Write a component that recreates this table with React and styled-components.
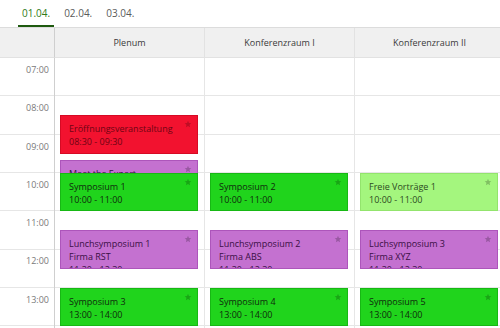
import styled, { createGlobalStyle } from "styled-components";

const HOUR = 38.3;
const START = 7;
const hours = ["07:00", "08:00", "09:00", "10:00", "11:00", "12:00", "13:00"];
const rooms = ["Plenum", "Konferenzraum I", "Konferenzraum II"];

const palette = {
  red: { bg: "#f2122f", border: "#d60a24", text: "#6e0413" },
  green: { bg: "#20d41c", border: "#17b814", text: "#0f2a0c" },
  light: { bg: "#a4f67e", border: "#93e46d", text: "#2c4a22" },
  purple: { bg: "#c471d0", border: "#ad55bb", text: "#3a0f44" },
};

const events = [
  [
    { title: "Eröffnungsveranstaltung", lines: ["08:30 - 09:30"], from: 8.5, to: 9.5, kind: "red" },
    { title: "Meet the Expert", lines: ["09:40 - 10:10"], from: 9.667, to: 10.2, kind: "purple" },
    { title: "Symposium 1", lines: ["10:00 - 11:00"], from: 10, to: 11, kind: "green" },
    { title: "Lunchsymposium 1", lines: ["Firma RST", "11:30 - 12:30"], from: 11.5, to: 12.5, kind: "purple" },
    { title: "Symposium 3", lines: ["13:00 - 14:00"], from: 13, to: 14, kind: "green" },
  ],
  [
    { title: "Symposium 2", lines: ["10:00 - 11:00"], from: 10, to: 11, kind: "green" },
    { title: "Lunchsymposium 2", lines: ["Firma ABS", "11:30 - 12:30"], from: 11.5, to: 12.5, kind: "purple" },
    { title: "Symposium 4", lines: ["13:00 - 14:00"], from: 13, to: 14, kind: "green" },
  ],
  [
    { title: "Freie Vorträge 1", lines: ["10:00 - 11:00"], from: 10, to: 11, kind: "light" },
    { title: "Luchsymposium 3", lines: ["Firma XYZ", "11:30 - 12:30"], from: 11.5, to: 12.5, kind: "purple" },
    { title: "Symposium 5", lines: ["13:00 - 14:00"], from: 13, to: 14, kind: "green" },
  ],
];

const Global = createGlobalStyle`
  html, body { margin: 0; padding: 0; background: #fff; }
  body { font-family: "Open Sans", "Liberation Sans", sans-serif; overflow: hidden; }
`;

const Page = styled.div`
  width: 500px;
  height: 328px;
  overflow: hidden;
`;

const Tabs = styled.nav`
  display: flex;
  gap: 6px;
  padding-left: 18px;
  height: 27px;
  border-bottom: 1px solid #dcdcdc;
`;

const Tab = styled.div`
  padding: 6px 4px 0;
  font-size: 10px;
  color: ${(p) => (p.$active ? "#2f7a17" : "#5a5a5a")};
  border-bottom: 2px solid ${(p) => (p.$active ? "#1e5a0f" : "transparent")};
  box-sizing: border-box;
  height: 27px;
`;

const Grid = styled.div`
  display: grid;
  grid-template-columns: 55px repeat(3, 150px);
  width: 505px;
`;

const HeadCell = styled.div`
  height: 29px;
  background: #f0f0f0;
  border-right: 1px solid ${(p) => (p.$time ? "#cfcfcf" : "#e2e2e2")};
  border-bottom: 1px solid #e2e2e2;
  display: flex;
  align-items: center;
  justify-content: center;
  font-size: 9px;
  color: #3a3a3a;
`;

const Column = styled.div`
  position: relative;
  height: ${HOUR * 7 + 10}px;
  border-right: 1px solid ${(p) => (p.$time ? "#cfcfcf" : "#e6e6e6")};
  background: repeating-linear-gradient(
    to bottom,
    transparent 0,
    transparent ${HOUR - 1}px,
    #e6e6e6 ${HOUR - 1}px,
    #e6e6e6 ${HOUR}px
  );
`;

const HourLabel = styled.div`
  height: ${HOUR}px;
  box-sizing: border-box;
  padding: 5px 5px 0 0;
  text-align: right;
  font-size: 9px;
  color: #7a7a7a;
`;

const Event = styled.div`
  position: absolute;
  left: 5px;
  right: 6px;
  box-sizing: border-box;
  overflow: hidden;
  padding: 6px 8px 0;
  background: ${(p) => palette[p.$kind].bg};
  border: 1px solid ${(p) => palette[p.$kind].border};
  color: ${(p) => palette[p.$kind].text};
  font-size: 9px;
  line-height: 13px;
`;

const Line = styled.div`
  white-space: nowrap;
`;

const Star = styled.svg`
  position: absolute;
  top: 4px;
  right: 5px;
  width: 8px;
  height: 8px;
  fill: rgba(0, 0, 0, 0.22);
`;

export default function App() {
  return (
    <Page>
      <Global />
      <Tabs>
        <Tab $active>01.04.</Tab>
        <Tab>02.04.</Tab>
        <Tab>03.04.</Tab>
      </Tabs>
      <Grid>
        <HeadCell $time />
        {rooms.map((r) => (
          <HeadCell key={r}>{r}</HeadCell>
        ))}
        <Column $time>
          {hours.map((h) => (
            <HourLabel key={h}>{h}</HourLabel>
          ))}
        </Column>
        {events.map((col, i) => (
          <Column key={i}>
            {col.map((e) => (
              <Event
                key={e.title}
                $kind={e.kind}
                style={{ top: (e.from - START) * HOUR, height: (e.to - e.from) * HOUR }}
              >
                <Line>{e.title}</Line>
                {e.lines.map((l) => (
                  <Line key={l}>{l}</Line>
                ))}
                <Star viewBox="0 0 24 24">
                  <path d="M12 2l2.9 6.9 7.1.6-5.4 4.7 1.6 7.3L12 17.8 5.8 21.5l1.6-7.3L2 9.5l7.1-.6z" />
                </Star>
              </Event>
            ))}
          </Column>
        ))}
      </Grid>
    </Page>
  );
}
